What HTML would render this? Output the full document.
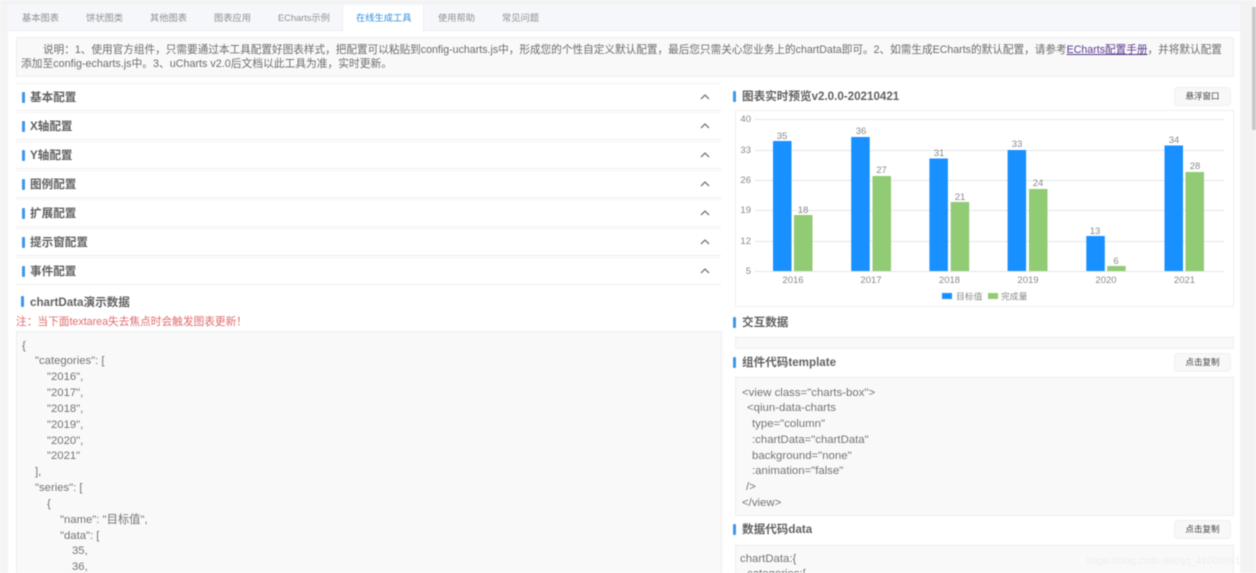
<!DOCTYPE html>
<html lang="zh"><head><meta charset="utf-8"><style>
html,body{margin:0;padding:0;width:1256px;height:573px;overflow:hidden;background:#fff}
#w{position:relative;width:1256px;height:573px;overflow:hidden;filter:blur(.55px);font-family:"Liberation Sans","Noto Sans CJK SC",sans-serif;color:#666}
#w div,#w span,#w a{position:absolute;white-space:nowrap;box-sizing:border-box}
.t{font-size:9.25px;line-height:14px;top:11px;color:#909090}
.row{left:16px;width:705px;height:28px;background:#fff;border-bottom:1px solid #eee;border-top:1px solid #f3f3f3}
.h{font-size:11.6px;font-weight:bold;line-height:16px;color:#626262}
.m{width:3px;height:11px;background:#3f97e8;border-radius:1px}
.btn{left:1174px;width:57px;height:19px;background:#f8f8f8;border:1px solid #f0f0f0;border-radius:4px;font-size:8.5px;line-height:17px;text-align:center;color:#444}
.box{background:#f9f9f9;border:1px solid #eee}
.c{font-size:11.3px;line-height:16px;color:#747474}
svg text{font-family:"Liberation Sans","Noto Sans CJK SC",sans-serif;fill:#8a8a8a}
</style></head><body><div id="w">
<div style="left:0;top:0;width:8px;height:573px;background:#f4f4f4"></div>
<div style="left:1240px;top:0;width:16px;height:573px;background:#f3f3f3"></div>
<div style="left:1252px;top:7px;width:4px;height:123px;background:#c9c9c9"></div>
<div style="left:0;top:0;width:1240px;height:4px;background:#f3f3f3"></div>
<div style="left:8px;top:4px;width:1232px;height:27px;background:#f5f7fa;border-bottom:1px solid #eee"></div>
<div style="left:342px;top:5px;width:82px;height:27px;background:#fff;border-left:1px solid #eee;border-right:1px solid #eee"></div>
<span class="t" style="left:22px">基本图表</span><span class="t" style="left:86px">饼状图类</span><span class="t" style="left:150px">其他图表</span><span class="t" style="left:214px">图表应用</span><span class="t" style="left:278px">ECharts示例</span><span class="t" style="left:356px;color:#2f8fe0">在线生成工具</span><span class="t" style="left:438px">使用帮助</span><span class="t" style="left:502px">常见问题</span>

<div style="left:16px;top:37px;width:1218px;height:40px;background:#f9f9fa;border:1px solid #eee;border-radius:2px"></div>
<span style="left:43px;top:43px;font-size:10.63px;line-height:14px;color:#6c6c6c">说明：1、使用官方组件，只需要通过本工具配置好图表样式，把配置可以粘贴到config-ucharts.js中，形成您的个性自定义默认配置，最后您只需关心您业务上的chartData即可。2、如需生成ECharts的默认配置，请参考<u style="color:#5b3a8c">ECharts配置手册</u>，并将默认配置</span>
<span style="left:21px;top:57px;font-size:10.75px;line-height:14px;color:#6c6c6c">添加至config-echarts.js中。3、uCharts v2.0后文档以此工具为准，实时更新。</span>

<div class="row" style="top:83px"></div><div class="row" style="top:112px"></div><div class="row" style="top:141px"></div><div class="row" style="top:170px"></div><div class="row" style="top:199px"></div><div class="row" style="top:228px"></div><div class="row" style="top:257px"></div>
<div class="m" style="left:22px;top:92px"></div><span class="h" style="left:30px;top:90px">基本配置</span>
<div class="m" style="left:22px;top:121px"></div><span class="h" style="left:30px;top:119px">X轴配置</span>
<div class="m" style="left:22px;top:150px"></div><span class="h" style="left:30px;top:148px">Y轴配置</span>
<div class="m" style="left:22px;top:179px"></div><span class="h" style="left:30px;top:177px">图例配置</span>
<div class="m" style="left:22px;top:208px"></div><span class="h" style="left:30px;top:206px">扩展配置</span>
<div class="m" style="left:22px;top:237px"></div><span class="h" style="left:30px;top:235px">提示窗配置</span>
<div class="m" style="left:22px;top:266px"></div><span class="h" style="left:30px;top:264px">事件配置</span>
<svg style="position:absolute;left:0;top:0" width="1256" height="573" fill="none" stroke="#777" stroke-width="1.3">
<path d="M701 99l4-4 4 4M701 128l4-4 4 4M701 157l4-4 4 4M701 186l4-4 4 4M701 215l4-4 4 4M701 244l4-4 4 4M701 273l4-4 4 4"/></svg>

<div class="m" style="left:21px;top:296px"></div><span class="h" style="left:30px;top:295px">chartData演示数据</span>
<span style="left:16px;top:315px;font-size:10.7px;line-height:14px;color:#e06a6a">注：当下面textarea失去焦点时会触发图表更新！</span>
<div class="box" style="left:16px;top:331px;width:706px;height:250px"></div>
<span class="c" style="left:22px;top:338px">{</span>
<span class="c" style="left:35px;top:353px">"categories": [</span>
<span class="c" style="left:47px;top:369px">"2016",</span>
<span class="c" style="left:47px;top:385px">"2017",</span>
<span class="c" style="left:47px;top:401px">"2018",</span>
<span class="c" style="left:47px;top:417px">"2019",</span>
<span class="c" style="left:47px;top:433px">"2020",</span>
<span class="c" style="left:47px;top:448px">"2021"</span>
<span class="c" style="left:35px;top:464px">],</span>
<span class="c" style="left:35px;top:480px">"series": [</span>
<span class="c" style="left:47px;top:496px">{</span>
<span class="c" style="left:60px;top:512px">"name": "目标值",</span>
<span class="c" style="left:60px;top:528px">"data": [</span>
<span class="c" style="left:72px;top:543px">35,</span>
<span class="c" style="left:72px;top:559px">36,</span>

<div class="m" style="left:733px;top:91px"></div><span class="h" style="left:742px;top:89px">图表实时预览v2.0.0-20210421</span>
<div class="btn" style="top:87px">悬浮窗口</div>
<div style="left:735px;top:110px;width:499px;height:197px;background:#fff;border:1px solid #eee"></div>
<svg style="position:absolute;left:0;top:0" width="1256" height="573">
<g stroke="#e6e6e6" stroke-width="1"><path d="M755 119.500H1224M755 150.500H1224M755 180.500H1224M755 210.500H1224M755 241.500H1224M755 271.500H1224"/></g>
<g font-size="9.500" text-anchor="end"><text x="751" y="122">40</text><text x="751" y="153">33</text><text x="751" y="183">26</text><text x="751" y="213">19</text><text x="751" y="244">12</text><text x="751" y="274">5</text></g>
<g fill="#1890ff">
<rect x="773" y="141" width="18.500" height="130"/><rect x="851.200" y="137" width="18.500" height="134"/><rect x="929.400" y="158.500" width="18.500" height="112.500"/><rect x="1007.600" y="150" width="18.500" height="121"/><rect x="1086.300" y="236" width="18.500" height="35"/><rect x="1164.500" y="145.500" width="18.500" height="125.500"/></g>
<g fill="#91cb74">
<rect x="794" y="215" width="18.500" height="56"/><rect x="872.500" y="176" width="18.500" height="95"/><rect x="950.700" y="202" width="18.500" height="69"/><rect x="1029" y="189" width="18.500" height="82"/><rect x="1107.200" y="266" width="18.500" height="5"/><rect x="1185.500" y="172" width="18.500" height="99"/></g>
<g font-size="9.500" text-anchor="middle">
<text x="782" y="139">35</text><text x="803" y="213">18</text><text x="861" y="134">36</text><text x="881.500" y="173">27</text><text x="939" y="156">31</text><text x="960" y="200">21</text><text x="1017" y="147">33</text><text x="1038" y="186">24</text><text x="1095" y="234">13</text><text x="1116" y="264">6</text><text x="1174" y="143">34</text><text x="1195" y="169">28</text>
<text x="793" y="283">2016</text><text x="871" y="283">2017</text><text x="949.500" y="283">2018</text><text x="1028" y="283">2019</text><text x="1106" y="283">2020</text><text x="1184.500" y="283">2021</text></g>
<rect x="942" y="293" width="10" height="6" fill="#1890ff"/><text x="956" y="299.500" font-size="8.800">目标值</text>
<rect x="988" y="293" width="10" height="6" fill="#91cb74"/><text x="1001" y="299.500" font-size="8.800">完成量</text>
</svg>

<div class="m" style="left:733px;top:317px"></div><span class="h" style="left:742px;top:315px">交互数据</span>
<div class="box" style="left:735px;top:337px;width:499px;height:12px"></div>
<div class="m" style="left:733px;top:357px"></div><span class="h" style="left:742px;top:355px">组件代码template</span>
<div class="btn" style="top:353px">点击复制</div>
<div class="box" style="left:735px;top:377px;width:499px;height:139px"></div>
<span class="c" style="left:742px;top:385px;font-size:11.4px">&lt;view class="charts-box"&gt;</span>
<span class="c" style="left:747px;top:400px;font-size:11.4px">&lt;qiun-data-charts</span>
<span class="c" style="left:752px;top:416px;font-size:11.4px">type="column"</span>
<span class="c" style="left:752px;top:432px;font-size:11.4px">:chartData="chartData"</span>
<span class="c" style="left:752px;top:448px;font-size:11.4px">background="none"</span>
<span class="c" style="left:752px;top:463px;font-size:11.4px">:animation="false"</span>
<span class="c" style="left:746px;top:479px;font-size:11.4px">/&gt;</span>
<span class="c" style="left:742px;top:495px;font-size:11.4px">&lt;/view&gt;</span>
<div class="m" style="left:733px;top:524px"></div><span class="h" style="left:742px;top:522px">数据代码data</span>
<div class="btn" style="top:520px">点击复制</div>
<div class="box" style="left:735px;top:545px;width:499px;height:40px"></div>
<span class="c" style="left:740px;top:551px;font-size:11.4px">chartData:{</span>
<span class="c" style="left:747px;top:566px;font-size:11.4px">categories:[</span>
<span style="left:1087px;top:555px;font-size:10px;line-height:14px;color:#eeeeee">https://blog.csdn.net/qq_41000891</span>
</div></body></html>
